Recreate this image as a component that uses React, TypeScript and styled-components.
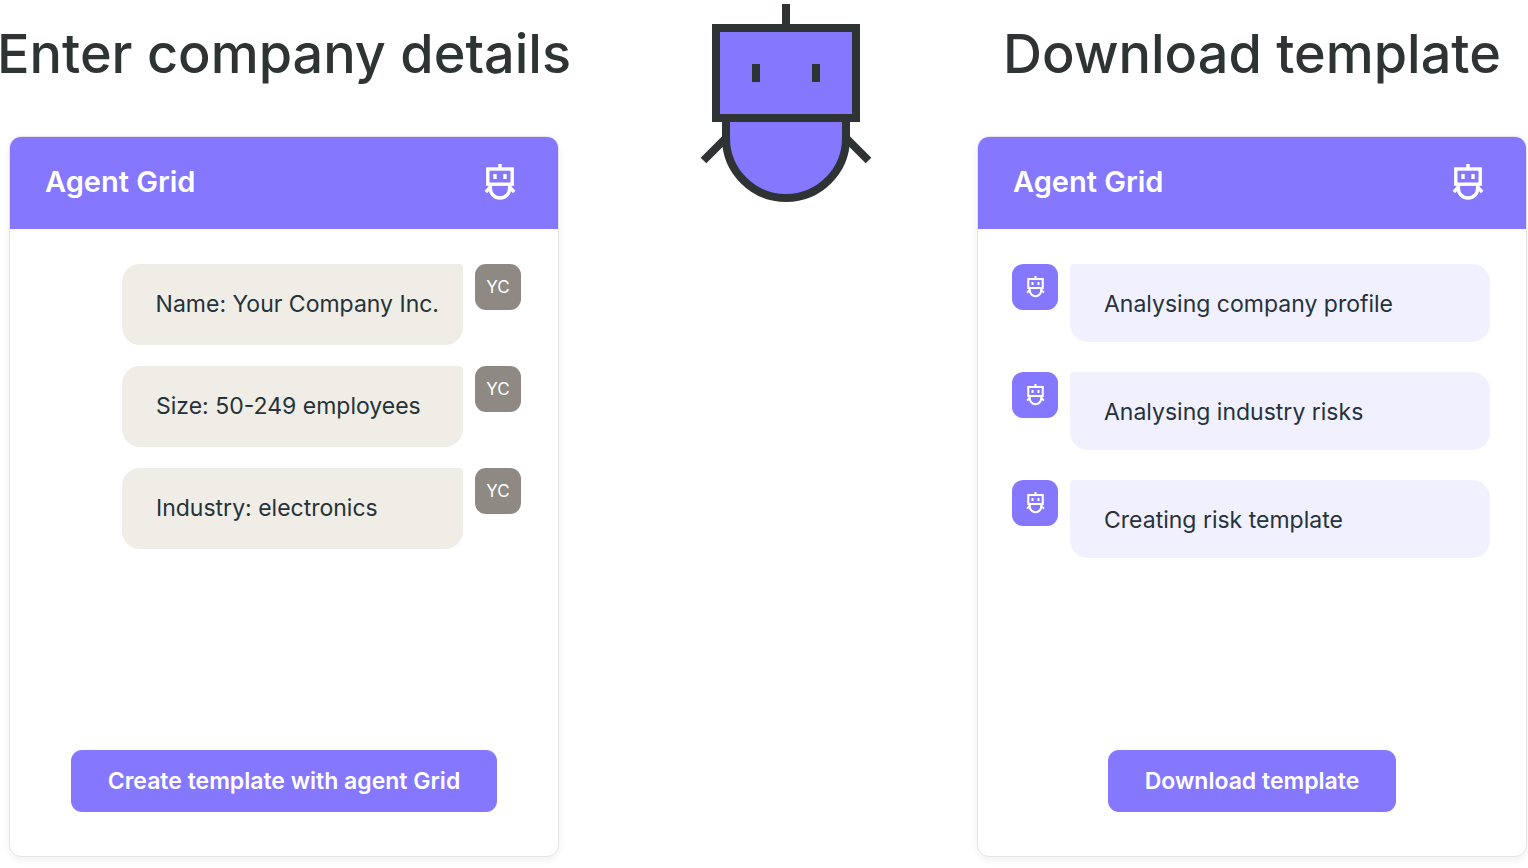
import React from 'react';
import styled, { createGlobalStyle } from 'styled-components';

const GlobalStyle = createGlobalStyle`
  *, *::before, *::after { box-sizing: border-box; }
  body {
    margin: 0;
    background: #fff;
    color: #2e3333;
    font-family: Inter, "Liberation Sans", sans-serif;
  }
`;

const Page = styled.main`
  display: grid;
  grid-template-columns: 550fr 418fr 550fr;
  min-height: 100vh;
  padding: 0 1px 11px 9px;
`;

const Column = styled.section`
  display: flex;
  flex-direction: column;
  align-items: center;
  min-width: 0;
`;

const Heading = styled.h2`
  margin: 22px 0 50px;
  font-size: 54px;
  line-height: 64px;
  font-weight: 500;
  white-space: nowrap;
`;

const Card = styled.article`
  display: flex;
  flex: 1;
  flex-direction: column;
  width: 100%;
  overflow: hidden;
  border: 1px solid #e4e4e6;
  border-radius: 12px;
  background: #fff;
  box-shadow: 0 3px 8px rgba(0, 0, 0, 0.06);
`;

const CardHeader = styled.header`
  display: flex;
  align-items: center;
  justify-content: space-between;
  height: 92px;
  padding: 0 42px 2px 35px;
  background: #8578ff;
  color: #fff;
`;

const CardTitle = styled.h3`
  margin: 0;
  font-size: 29px;
  line-height: 36px;
  font-weight: 600;
`;

const Messages = styled.ul<{ $own?: boolean }>`
  display: flex;
  flex: 1;
  flex-direction: column;
  gap: ${(p) => (p.$own ? 21 : 30)}px;
  margin: 0;
  padding: 35px ${(p) => (p.$own ? 37 : 36)}px 35px 34px;
  list-style: none;
`;

const Message = styled.li<{ $own?: boolean }>`
  display: flex;
  flex-direction: ${(p) => (p.$own ? 'row-reverse' : 'row')};
  align-items: flex-start;
  gap: 12px;
`;

const Bubble = styled.p<{ $own?: boolean }>`
  flex: ${(p) => (p.$own ? '0 1 341px' : '1')};
  margin: 0;
  padding: ${(p) => (p.$own ? '24px 24px 25px 34px' : '24px 24px 22px 34px')};
  border-radius: ${(p) => (p.$own ? '18px 4px 18px 18px' : '4px 18px 18px 18px')};
  background: ${(p) => (p.$own ? '#efede6' : '#f1f0ff')};
  color: #25323a;
  font-size: 23px;
  line-height: 32px;
  white-space: nowrap;
`;

const Avatar = styled.span<{ $own?: boolean }>`
  display: flex;
  flex: none;
  align-items: center;
  justify-content: center;
  width: 46px;
  height: 46px;
  border-radius: 11px;
  background: ${(p) => (p.$own ? '#8e8982' : '#8578ff')};
  color: #fff;
  font-size: 17px;
  line-height: 24px;
`;

const Action = styled.button`
  align-self: center;
  height: 62px;
  margin-bottom: 44px;
  padding: 0 37px;
  border: 0;
  border-radius: 11px;
  background: #8578ff;
  color: #fff;
  font: 600 23px/32px Inter, "Liberation Sans", sans-serif;
  white-space: nowrap;
  cursor: pointer;
`;

const Mascot = styled.div`
  display: flex;
  justify-content: center;
  align-items: flex-start;
  padding: 4px 0 0 36px;
`;

const MascotArt = () => (
  <svg width="172" height="200" viewBox="700 4 172 200" fill="#8578ff" stroke="#2e3333" strokeWidth="8" role="img" aria-label="Grid, the agent">
    <path d="M786 4V26" />
    <path d="M725 139 703.500 160.500M847 139 868.500 160.500" />
    <path d="M726 118V138A60 60 0 0 0 846 138V118" />
    <rect x="716" y="28" width="140" height="90" />
    <path d="M756 64V82M816 64V82" />
  </svg>
);

const AgentIcon = ({ size }: { size: number }) => (
  <svg width={size} height={size * 1.125} viewBox="0 0 32 36" fill="none" stroke="#fff" strokeWidth="3.400" aria-hidden="true">
    <path d="M16 0V5" />
    <rect x="3.800" y="5" width="24.400" height="15.200" />
    <path d="M11 10V15M21 10V15" />
    <path d="M6.400 21V24.400A9.600 9.600 0 0 0 25.600 24.400V21" />
    <path d="M6 23.500 1.800 28M26 23.500 30.200 28" />
  </svg>
);

type PanelProps = {
  heading: string;
  messages: string[];
  action: string;
  own?: boolean;
};

const Panel = ({ heading, messages, action, own }: PanelProps) => (
  <Column>
    <Heading>{heading}</Heading>
    <Card>
      <CardHeader>
        <CardTitle>Agent Grid</CardTitle>
        <AgentIcon size={32} />
      </CardHeader>
      <Messages $own={own}>
        {messages.map((text) => (
          <Message key={text} $own={own}>
            <Avatar $own={own}>{own ? 'YC' : <AgentIcon size={19} />}</Avatar>
            <Bubble $own={own}>{text}</Bubble>
          </Message>
        ))}
      </Messages>
      <Action type="button">{action}</Action>
    </Card>
  </Column>
);

export default function App() {
  return (
    <>
      <GlobalStyle />
      <Page>
        <Panel
          own
          heading="Enter company details"
          messages={['Name: Your Company Inc.', 'Size: 50-249 employees', 'Industry: electronics']}
          action="Create template with agent Grid"
        />
        <Mascot>
          <MascotArt />
        </Mascot>
        <Panel
          heading="Download template"
          messages={['Analysing company profile', 'Analysing industry risks', 'Creating risk template']}
          action="Download template"
        />
      </Page>
    </>
  );
}
